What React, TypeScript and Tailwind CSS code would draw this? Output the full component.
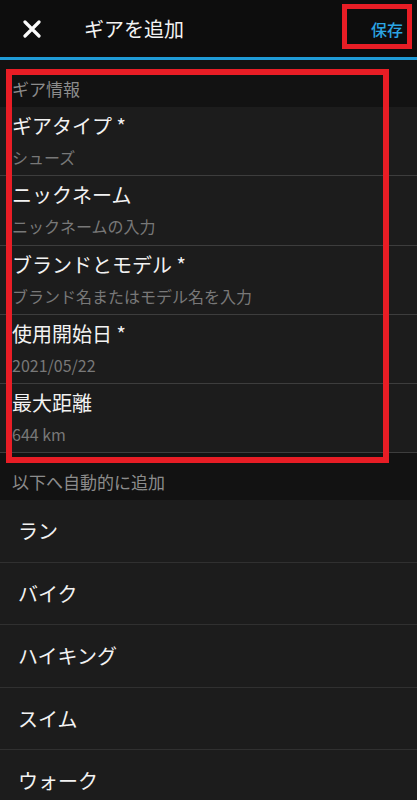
import { ReactNode } from 'react'

const gearFields = [
  { label: 'ギアタイプ *', value: 'シューズ' },
  { label: 'ニックネーム', value: 'ニックネームの入力' },
  { label: 'ブランドとモデル *', value: 'ブランド名またはモデル名を入力' },
  { label: '使用開始日 *', value: '2021/05/22' },
  { label: '最大距離', value: '644 km' },
]

const activities = ['ラン', 'バイク', 'ハイキング', 'スイム', 'ウォーク']

function SectionHeader({ children }: { children: ReactNode }) {
  return (
    <div className="h-[47px] bg-[#121212] px-[12px] pt-[17px] text-[17px] leading-[24px] text-[#8c8c8c]">
      {children}
    </div>
  )
}

export default function App() {
  return (
    <div
      className="relative w-[417px] h-[800px] overflow-hidden bg-[#1c1c1c]"
      style={{ fontFamily: '"Noto Sans CJK JP", "Noto Sans", sans-serif' }}
    >
      {/* top bar */}
      <header className="h-[57px] bg-[#0d0d0d] flex items-center">
        <button className="w-[64px] h-full flex items-center justify-center">
          <svg width="18" height="18" viewBox="0 0 18 18">
            <path d="M2 2 L16 16 M16 2 L2 16" stroke="#fafafa" strokeWidth="3.2" strokeLinecap="round" />
          </svg>
        </button>
        <h1 className="ml-[20px] text-[20px] leading-[28px] text-[#f2f2f2]">ギアを追加</h1>
        <button className="ml-auto mr-[14px] text-[16px] leading-[22px] font-medium text-[#2ba4e2]">保存</button>
      </header>
      <div className="h-[3px] bg-[#1f9bd7]" />

      <SectionHeader>ギア情報</SectionHeader>
      <div>
        {gearFields.map((f) => (
          <div key={f.label} className="h-[69.3px] border-b border-[#3d3d3d] bg-[#1c1c1c] px-[12px] pt-[5px] flex flex-col">
            <div className="text-[20px] leading-[28px] text-[#f2f2f2]">{f.label}</div>
            <div className="mt-[6px] text-[16px] leading-[22px] text-[#787878]">{f.value}</div>
          </div>
        ))}
      </div>

      <SectionHeader>以下へ自動的に追加</SectionHeader>
      <div>
        {activities.map((a) => (
          <div key={a} className="h-[62.5px] border-b border-[#303030] bg-[#1c1c1c] px-[18px] flex items-center">
            <span className="text-[20px] leading-[28px] text-[#f2f2f2]">{a}</span>
          </div>
        ))}
      </div>

      {/* annotation boxes */}
      <div className="absolute left-[342px] top-[4px] w-[70px] h-[45px] border-[5px] border-[#e81d25] pointer-events-none" />
      <div className="absolute left-[6px] top-[69px] w-[383px] h-[394px] border-[6px] border-[#e81d25] pointer-events-none" />
    </div>
  )
}
